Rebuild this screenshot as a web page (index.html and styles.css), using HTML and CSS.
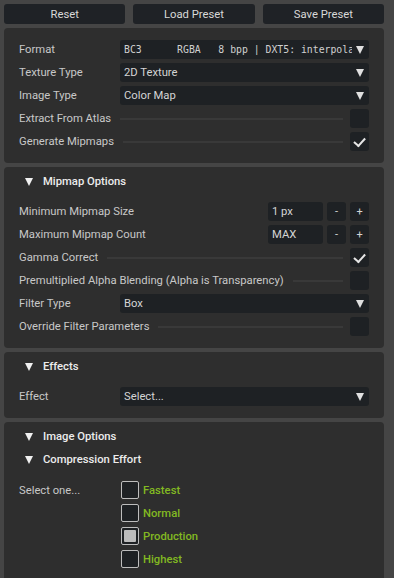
FILE: index.html
```html
<!DOCTYPE html>
<html lang="en">
<head>
    <meta charset="UTF-8">
    <meta name="viewport" content="width=device-width, initial-scale=1.0">
    <title>Texture Import Settings</title>
    <link rel="stylesheet" href="styles.css">
</head>
<body>
    <div class="toolbar">
        <button class="tool-btn">Reset</button>
        <button class="tool-btn">Load Preset</button>
        <button class="tool-btn">Save Preset</button>
    </div>

    <div class="panel">
        <div class="row">
            <span class="label">Format</span>
            <div class="select mono"><span class="select-text">BC3      RGBA   8 bpp | DXT5: interpolated alpha</span><span class="arrow"></span></div>
        </div>
        <div class="row">
            <span class="label">Texture Type</span>
            <div class="select"><span class="select-text">2D Texture</span><span class="arrow"></span></div>
        </div>
        <div class="row">
            <span class="label">Image Type</span>
            <div class="select"><span class="select-text">Color Map</span><span class="arrow"></span></div>
        </div>
        <div class="row">
            <span class="label auto">Extract From Atlas</span>
            <span class="rule"></span>
            <span class="check"></span>
        </div>
        <div class="row">
            <span class="label auto">Generate Mipmaps</span>
            <span class="rule"></span>
            <span class="check checked"></span>
        </div>
    </div>

    <div class="panel panel-head">
        <div class="section-title"><span class="tri"></span>Mipmap Options</div>
        <div class="rows">
            <div class="row">
                <span class="label">Minimum Mipmap Size</span>
                <div class="stepper">
                    <span class="num">1 px</span>
                    <button class="step">-</button>
                    <button class="step">+</button>
                </div>
            </div>
            <div class="row">
                <span class="label">Maximum Mipmap Count</span>
                <div class="stepper">
                    <span class="num">MAX</span>
                    <button class="step">-</button>
                    <button class="step">+</button>
                </div>
            </div>
            <div class="row">
                <span class="label auto">Gamma Correct</span>
                <span class="rule"></span>
                <span class="check checked"></span>
            </div>
            <div class="row">
                <span class="label auto">Premultiplied Alpha Blending (Alpha is Transparency)</span>
                <span class="rule"></span>
                <span class="check"></span>
            </div>
            <div class="row">
                <span class="label">Filter Type</span>
                <div class="select"><span class="select-text">Box</span><span class="arrow"></span></div>
            </div>
            <div class="row">
                <span class="label auto">Override Filter Parameters</span>
                <span class="rule"></span>
                <span class="check"></span>
            </div>
        </div>
    </div>

    <div class="panel panel-head">
        <div class="section-title"><span class="tri"></span>Effects</div>
        <div class="rows">
            <div class="row">
                <span class="label">Effect</span>
                <div class="select"><span class="select-text">Select...</span><span class="arrow"></span></div>
            </div>
        </div>
    </div>

    <div class="panel panel-head panel-last">
        <div class="section-title"><span class="tri"></span>Image Options</div>
        <div class="section-title"><span class="tri"></span>Compression Effort</div>
        <div class="choice">
            <span class="choice-label">Select one...</span>
            <ul class="options">
                <li><span class="box"></span>Fastest</li>
                <li><span class="box"></span>Normal</li>
                <li><span class="box on"></span>Production</li>
                <li><span class="box"></span>Highest</li>
            </ul>
        </div>
    </div>
</body>
</html>
```

FILE: styles.css
```css
body {
    margin: 0;
    padding: 4px 10px 0 4px;
    background-color: #454545;
    font-family: Roboto, "Liberation Sans", sans-serif;
    font-size: 11.25px;
    color: #c8c8c8;
    height: 100vh;
    box-sizing: border-box;
    overflow: hidden;
    display: flex;
    flex-direction: column;
}

.toolbar {
    display: grid;
    grid-template-columns: repeat(3, 1fr);
    gap: 8px;
    margin-bottom: 4px;
}

.tool-btn {
    height: 20px;
    border: none;
    border-radius: 3px;
    background-color: #1f2226;
    color: #d8d8d8;
    font-family: inherit;
    font-size: 11.25px;
    padding: 0;
}

.panel {
    background-color: #2e2e2e;
    border-radius: 4px;
    padding: 12px 15px;
    margin-bottom: 4px;
    display: flex;
    flex-direction: column;
    gap: 4px;
    flex-shrink: 0;
}

.panel-head {
    padding-top: 5px;
    gap: 0;
}

.panel-last {
    flex: 1;
    margin-bottom: 0;
    border-radius: 4px 4px 0 0;
}

.section-title {
    display: flex;
    align-items: center;
    height: 19px;
    margin-bottom: 4px;
    color: #ececec;
    font-weight: 500;
}

.tri {
    width: 0;
    height: 0;
    border-left: 4.5px solid transparent;
    border-right: 4.5px solid transparent;
    border-top: 8px solid #f0f0f0;
    margin: 0 10px 0 6px;
}

.rows {
    display: flex;
    flex-direction: column;
    gap: 4px;
    margin-top: 7px;
}

.row {
    display: flex;
    align-items: center;
    height: 19px;
}

.label {
    white-space: nowrap;
    width: 101px;
    flex-shrink: 0;
}

.label.auto {
    width: auto;
}

.rule {
    flex: 1;
    height: 2px;
    background-color: #393939;
    margin: 0 7px 0 9px;
}

.select {
    flex: 1;
    min-width: 0;
    height: 19px;
    background-color: #1e2124;
    border-radius: 3px;
    display: flex;
    align-items: center;
    padding: 0 5px 0 4px;
    color: #d4d4d4;
}

.select-text {
    flex: 1;
    min-width: 0;
    white-space: pre;
    overflow: hidden;
}

.mono .select-text {
    font-family: "DejaVu Sans Mono", monospace;
    font-size: 9.8px;
    color: #d0d0d0;
}

.arrow {
    flex-shrink: 0;
    width: 0;
    height: 0;
    border-left: 4px solid transparent;
    border-right: 4px solid transparent;
    border-top: 8px solid #e0e0e0;
    margin-left: 4px;
}

.check {
    width: 19px;
    height: 19px;
    border-radius: 3px;
    background-color: #1e2124;
    flex-shrink: 0;
    position: relative;
}

.check.checked::after {
    content: "";
    position: absolute;
    left: 4px;
    top: 4px;
    width: 9px;
    height: 5px;
    border-left: 2px solid #e6e6e6;
    border-bottom: 2px solid #e6e6e6;
    transform: rotate(-48deg) translate(-1px, 1px);
}

.stepper {
    margin-left: auto;
    display: flex;
    gap: 4px;
}

.num {
    width: 51px;
    height: 19px;
    line-height: 19px;
    padding-left: 4px;
    background-color: #1e2124;
    border-radius: 3px;
    color: #d4d4d4;
}

.step {
    width: 19px;
    height: 19px;
    padding: 0;
    border: none;
    border-radius: 3px;
    background-color: #1e2124;
    color: #d4d4d4;
    font-family: inherit;
    font-size: 11px;
}

.choice {
    display: flex;
    margin-top: 8px;
}

.choice-label {
    width: 102px;
    padding-top: 3px;
}

.options {
    list-style: none;
    margin: 0;
    padding: 0;
    display: flex;
    flex-direction: column;
    gap: 5px;
}

.options li {
    display: flex;
    align-items: center;
    height: 18px;
    color: #82b922;
    font-weight: 500;
}

.box {
    width: 16px;
    height: 16px;
    border: 1px solid #bdbdbd;
    border-radius: 2px;
    background-color: #1e2124;
    margin-right: 4px;
    position: relative;
}

.box.on::after {
    content: "";
    position: absolute;
    left: 2px;
    top: 2px;
    width: 12px;
    height: 12px;
    border-radius: 1px;
    background-color: #bcbcbc;
}
```
